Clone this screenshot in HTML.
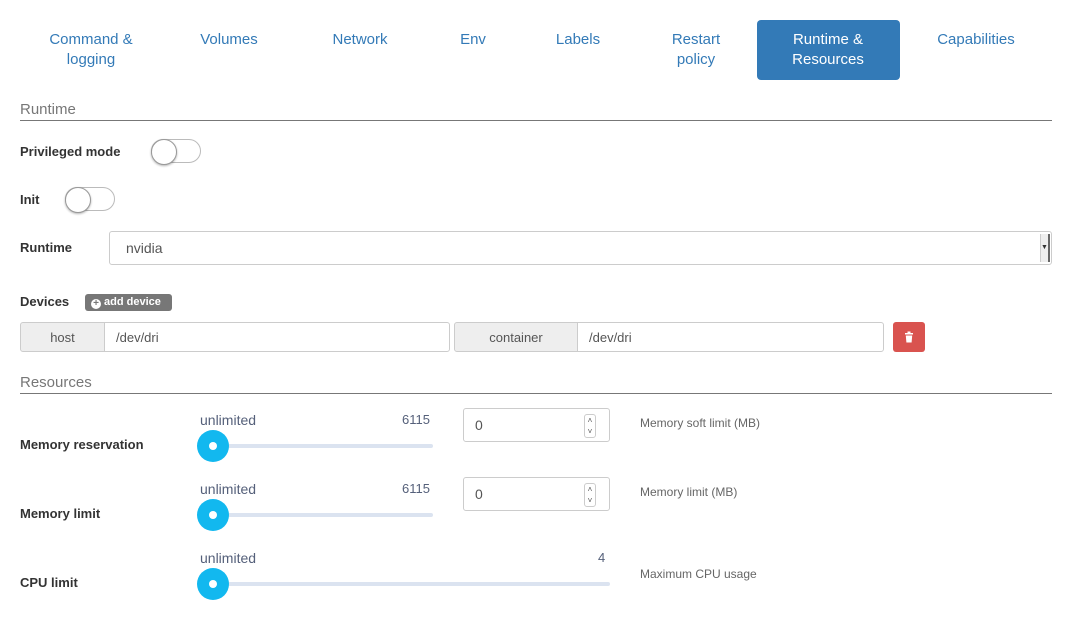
<!DOCTYPE html>
<html><head><meta charset="utf-8"><style>
*{box-sizing:border-box;margin:0;padding:0}
body{width:1072px;height:635px;background:#fff;font-family:"Liberation Sans",sans-serif;position:relative;overflow:hidden;color:#333}
.a{position:absolute}
.tab{position:absolute;top:30px;color:#337ab7;font-size:15px;text-align:center;line-height:20px;transform:translateX(-50%);white-space:nowrap}
.h{position:absolute;left:20px;width:1032px;border-bottom:1px solid #777;color:#777;font-size:15px;padding-bottom:2px}
.lbl{position:absolute;left:20px;font-size:13px;font-weight:bold;color:#333}
.tog{position:absolute;width:50px;height:24px;border:1px solid #bbb;border-radius:12px;background:#fff}
.tog:before{content:"";position:absolute;left:-1px;top:-1px;width:24px;height:24px;border-radius:50%;background:#fff;border:1px solid #999;box-shadow:0 1px 2px rgba(0,0,0,.3)}
.inp{position:absolute;border:1px solid #ccc;border-radius:3px;background:#fff;font-size:14px;color:#555;padding-left:11px;display:flex;align-items:center}
.add{position:absolute;background:#eee;border:1px solid #ccc;font-size:13px;color:#555;display:flex;align-items:center;justify-content:center}
.sl{position:absolute;font-size:14px;color:#55607a}
.track{position:absolute;height:4px;background:#dbe3f0;border-radius:2px}
.th{position:absolute;width:32px;height:32px;border-radius:50%;background:#12b8ef}
.th:after{content:"";position:absolute;left:12px;top:12px;width:8px;height:8px;border-radius:50%;background:#fff}
.help{position:absolute;left:640px;font-size:12px;color:#666}
.spin{position:absolute;right:13px;top:5px;width:12px;height:24px;border:1px solid #ccc;border-radius:3px;font-size:8px;line-height:11px;text-align:center;color:#555}
</style></head><body>
<div class="tab" style="left:91px">Command &amp;<br>logging</div>
<div class="tab" style="left:229px">Volumes</div>
<div class="tab" style="left:360px">Network</div>
<div class="tab" style="left:473px">Env</div>
<div class="tab" style="left:578px">Labels</div>
<div class="tab" style="left:696px">Restart<br>policy</div>
<div class="a" style="left:757px;top:20px;width:143px;height:60px;background:#337ab7;border-radius:4px"></div>
<div class="tab" style="left:828px;color:#fff">Runtime &amp;<br>Resources</div>
<div class="tab" style="left:976px">Capabilities</div>

<div class="h" style="top:101px">Runtime</div>
<div class="lbl" style="top:144px">Privileged mode</div>
<div class="tog" style="left:151px;top:139px"></div>
<div class="lbl" style="top:192px">Init</div>
<div class="tog" style="left:65px;top:187px"></div>
<div class="lbl" style="top:240px">Runtime</div>
<div class="inp" style="left:109px;top:231px;width:943px;height:34px;padding-left:16px">nvidia</div>
<div class="a" style="left:1040px;top:234px;width:10px;height:28px;background:#eee;border-left:1px solid #ccc;border-right:2px solid #666;font-size:7px;line-height:28px;text-align:center">▼</div>

<div class="lbl" style="top:294px">Devices</div>
<div class="a" style="left:85px;top:294px;width:87px;height:17px;background:#777;border-radius:3px;color:#fff;font-size:11px;font-weight:bold;line-height:17px;padding-left:6px"><span style="display:inline-block;width:10px;height:10px;border-radius:50%;background:#fff;color:#777;font-size:10px;line-height:10px;text-align:center;vertical-align:-1px">+</span> add device</div>
<div class="add" style="left:20px;top:322px;width:85px;height:30px;border-radius:3px 0 0 3px">host</div>
<div class="inp" style="left:104px;top:322px;width:346px;height:30px;border-radius:0 3px 3px 0;font-size:13px">/dev/dri</div>
<div class="add" style="left:454px;top:322px;width:124px;height:30px;border-radius:3px 0 0 3px">container</div>
<div class="inp" style="left:577px;top:322px;width:307px;height:30px;border-radius:0 3px 3px 0;font-size:13px">/dev/dri</div>
<div class="a" style="left:893px;top:322px;width:32px;height:30px;background:#d9534f;border-radius:3px"><svg width="32" height="30"><rect x="12" y="11" width="8" height="1.5" fill="#fff"/><rect x="14.5" y="9.5" width="3" height="2" fill="#fff"/><path d="M12.8 13.5h6.4l-.6 7h-5.2z" fill="#fff"/></svg></div>

<div class="h" style="top:374px">Resources</div>

<div class="lbl" style="top:437px">Memory reservation</div>
<div class="sl" style="left:200px;top:412px">unlimited</div>
<div class="sl" style="left:402px;top:412px;font-size:13px">6115</div>
<div class="track" style="left:213px;top:444px;width:220px"></div>
<div class="th" style="left:197px;top:430px"></div>
<div class="inp" style="left:463px;top:408px;width:147px;height:34px">0<div class="spin">˄<br>˅</div></div>
<div class="help" style="top:416px">Memory soft limit (MB)</div>

<div class="lbl" style="top:506px">Memory limit</div>
<div class="sl" style="left:200px;top:481px">unlimited</div>
<div class="sl" style="left:402px;top:481px;font-size:13px">6115</div>
<div class="track" style="left:213px;top:513px;width:220px"></div>
<div class="th" style="left:197px;top:499px"></div>
<div class="inp" style="left:463px;top:477px;width:147px;height:34px">0<div class="spin">˄<br>˅</div></div>
<div class="help" style="top:485px">Memory limit (MB)</div>

<div class="lbl" style="top:575px">CPU limit</div>
<div class="sl" style="left:200px;top:550px">unlimited</div>
<div class="sl" style="left:598px;top:550px;font-size:13px">4</div>
<div class="track" style="left:213px;top:582px;width:397px"></div>
<div class="th" style="left:197px;top:568px"></div>
<div class="help" style="top:567px">Maximum CPU usage</div>
</body></html>
